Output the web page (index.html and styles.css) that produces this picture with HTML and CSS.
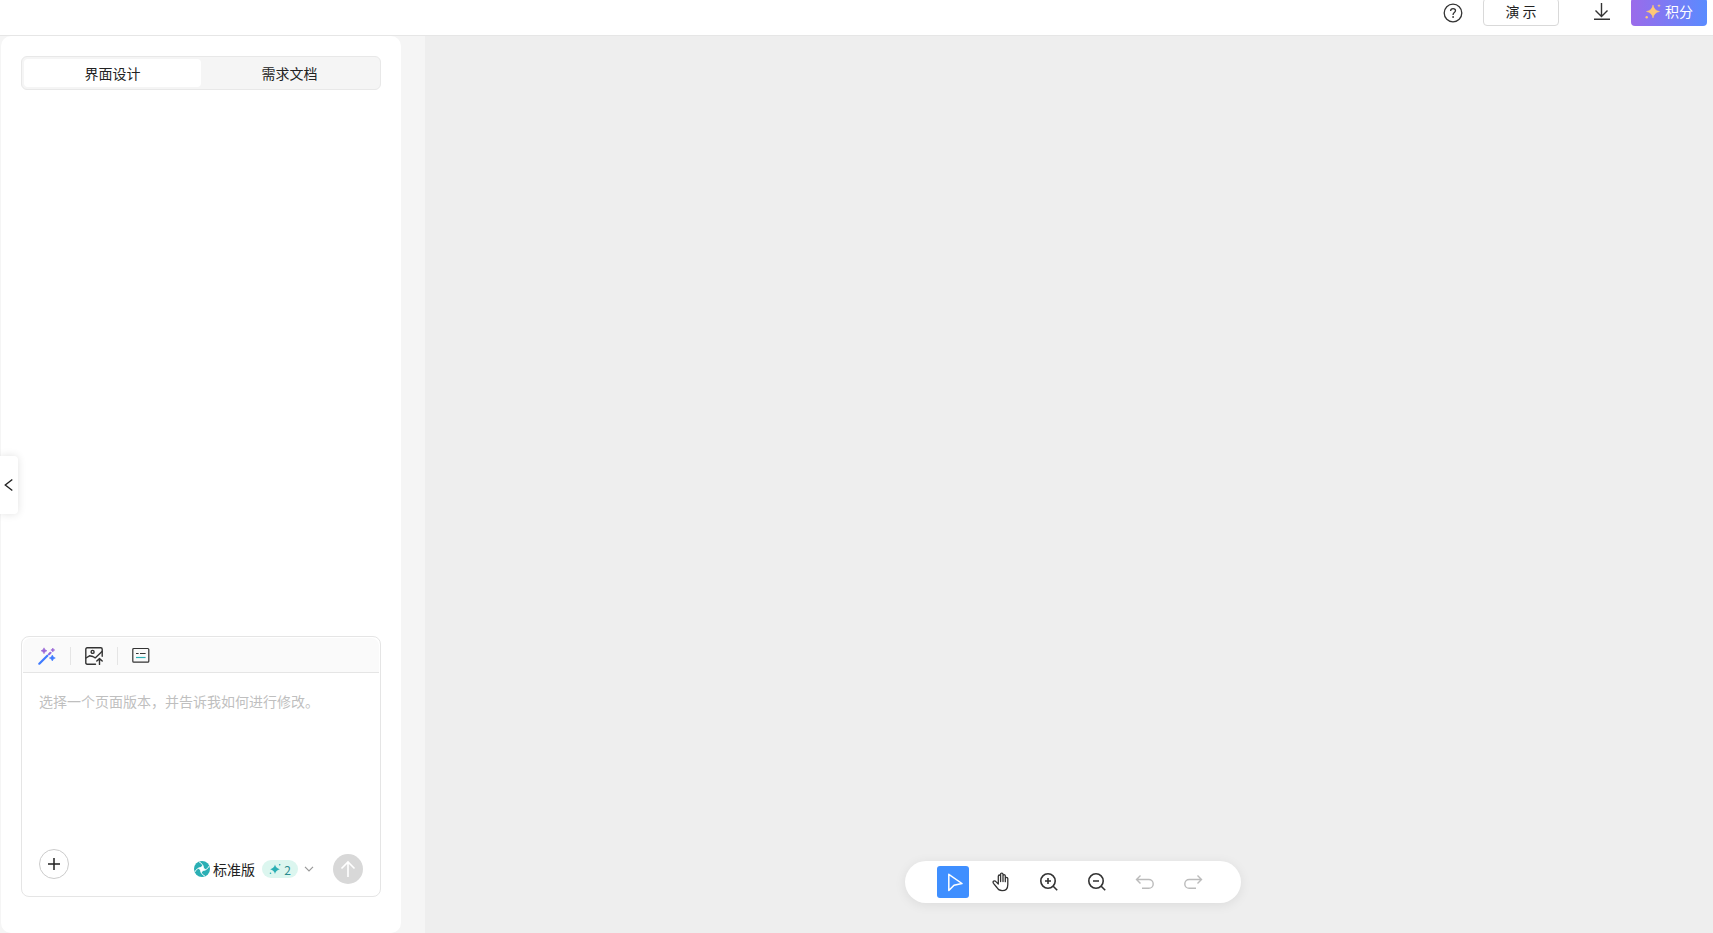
FILE: index.html
```html
<!DOCTYPE html>
<html lang="zh-CN">
<head>
    <meta charset="UTF-8">
    <title>界面设计</title>
    <link rel="stylesheet" href="styles.css">
</head>

<body>

<!-- Top bar -->
<header class="topbar">
    <button type="button" class="icon-btn help-btn" aria-label="帮助">
        <svg width="20" height="20" viewBox="0 0 20 20" fill="none" stroke="#333" stroke-width="1.3">
            <circle cx="10" cy="10" r="8.8"/>
            <path d="M7.6 8.1c0-1.5 1-2.5 2.5-2.5s2.4 1 2.4 2.2c0 1.6-2.4 1.9-2.4 3.7v.4"/>
            <circle cx="10.1" cy="14" r=".9" fill="#333" stroke="none"/>
        </svg>
    </button>
    <button type="button" class="demo-btn">演 示</button>
    <button type="button" class="icon-btn download-btn" aria-label="下载">
        <svg width="18" height="20" viewBox="0 0 18 20" fill="none" stroke="#333" stroke-width="1.4">
            <path d="M8.5 1v13M2.5 8.5l6 6 6-6M1 17.3h16"/>
        </svg>
    </button>
    <button type="button" class="points-btn">
        <svg width="16" height="16" viewBox="0 0 16 16" fill="#ffc876">
            <path d="M8 2Q9 7.500 14.500 8.500 9 9.500 8 15 7 9.500 1.500 8.500 7 7.500 8 2z" stroke="#ffc876" stroke-width=".5"/>
            <path d="M14 1l.5 1.300 1.300.5-1.300.5-.5 1.300-.5-1.300-1.300-.5 1.300-.5z"/>
            <circle cx="1.700" cy="14.300" r="1.200"/>
        </svg>
        <span>积分</span>
    </button>
</header>

<main class="workspace">

    <!-- Left panel -->
    <section class="sidebar">
        <div class="panel">
            <div class="tabs">
                <button type="button" class="tab active">界面设计</button>
                <button type="button" class="tab">需求文档</button>
            </div>

            <form class="composer">
                <div class="composer-tools">
                    <button type="button" class="icon-btn" aria-label="魔法优化">
                        <svg width="18" height="18" viewBox="0 0 18 18">
                            <path d="M1.300 16.700L9.300 8.700" stroke="#3f7bff" stroke-width="2.200" stroke-linecap="round"/>
                            <path d="M11 7.200l1.500-1.400" stroke="#8f6be0" stroke-width="2.200" stroke-linecap="round"/>
                            <path d="M6 .8q.6 2.400 3 3-2.400.6-3 3-.6-2.400-3-3 2.400-.6 3-3z" fill="#9b68d6" stroke="#9b68d6" stroke-width=".5"/>
                            <path d="M14.800 1q.4 1.600 2 2-1.600.4-2 2-.4-1.600-2-2 1.600-.4 2-2z" fill="#9b68d6" stroke="#9b68d6" stroke-width=".5"/>
                            <path d="M14.300 8q.6 2.400 3 3-2.400.6-3 3-.6-2.400-3-3 2.400-.6 3-3z" fill="#3f7bff" stroke="#3f7bff" stroke-width=".5"/>
                        </svg>
                    </button>
                    <span class="divider"></span>
                    <button type="button" class="icon-btn" aria-label="上传图片">
                        <svg width="18" height="18" viewBox="0 0 18 18" fill="none" stroke="#333" stroke-width="1.400" stroke-linecap="round" stroke-linejoin="round">
                            <path d="M10.500 17.200H2.200Q.8 17.200.8 15.800V2.200Q.8.8 2.200.8h13.600q1.400 0 1.400 1.400v7"/>
                            <circle cx="7.600" cy="4.900" r="1.500"/>
                            <path d="M1 11l3.500-2.200 3.300.7 2.400 1.400 6.800-6.400"/>
                            <path d="M14.500 17.500v-6M11.800 14l2.700-2.600 2.700 2.600"/>
                        </svg>
                    </button>
                    <span class="divider"></span>
                    <button type="button" class="icon-btn" aria-label="需求列表">
                        <svg width="18" height="18" viewBox="0 0 18 18" fill="none" stroke="#333" stroke-width="1.200">
                            <rect x=".8" y="1.500" width="16" height="13.700" rx="1"/>
                            <path d="M4 6.500h2.600M8 6.500h5.600"/>
                            <path d="M4 10.500h9.600" stroke="#2aafb4"/>
                        </svg>
                    </button>
                </div>

                <textarea class="prompt" aria-label="修改说明" placeholder="选择一个页面版本，并告诉我如何进行修改。"></textarea>

                <div class="composer-footer">
                    <button type="button" class="add-btn" aria-label="添加">
                        <svg width="14" height="14" viewBox="0 0 14 14" stroke="#222" stroke-width="1.500">
                            <path d="M7 1v12M1 7h12"/>
                        </svg>
                    </button>
                    <button type="button" class="model-btn">
                        <svg width="16" height="16" viewBox="0 0 16 16">
                            <circle cx="8" cy="8" r="8" fill="#2aafb4"/>
                            <path d="M9 4.600Q9 7 11.400 9 9 9 7 11.400 7 9 4.600 7 7 7 9 4.600z" fill="#fff" stroke="#fff" stroke-width=".8"/>
                            <g fill="none" stroke="#fff" stroke-width=".9">
                                <path d="M9 5Q8.200 2.200 5 .8"/>
                                <path d="M11 9Q13.800 8.200 15.200 5"/>
                                <path d="M7 11Q7.800 13.800 11 15.200"/>
                                <path d="M5 7Q2.200 7.800.8 11"/>
                            </g>
                        </svg>
                        <span class="model-name">标准版</span>
                        <span class="cost">
                            <svg width="12" height="12" viewBox="0 0 12 12" fill="#2aafb4">
                                <path d="M6 1.500q.8 3.800 4.800 4.700Q6.800 7.100 6 11 5.200 7.100 1.200 6.200 5.200 5.300 6 1.500z"/>
                                <circle cx="10.700" cy="1.800" r=".8"/>
                                <circle cx="1.500" cy="10.200" r=".8"/>
                            </svg>
                            2
                        </span>
                        <svg width="10" height="10" viewBox="0 0 10 10" fill="none" stroke="#999" stroke-width="1.200">
                            <path d="M1 2.800l4 4 4-4"/>
                        </svg>
                    </button>
                    <button type="submit" class="send-btn" aria-label="发送">
                        <svg width="18" height="18" viewBox="0 0 18 18" fill="none" stroke="#fff" stroke-width="1.600">
                            <path d="M9 17V2M2.500 8.500L9 2l6.500 6.500"/>
                        </svg>
                    </button>
                </div>
            </form>
        </div>

        <button type="button" class="collapse-btn" aria-label="收起">
            <svg width="10" height="14" viewBox="0 0 10 14" fill="none" stroke="#222" stroke-width="1.400">
                <path d="M8.300 1.500L1.300 7l7 5.500"/>
            </svg>
        </button>
    </section>

    <!-- Canvas with its tools -->
    <section class="canvas">
        <div class="toolbar">
            <button type="button" class="tool selected" aria-label="选择">
                <svg width="20" height="20" viewBox="0 0 20 20" fill="none" stroke="#fff" stroke-width="1.500" stroke-linejoin="round">
                    <path d="M5.800 2.300L19 11.500l-8 1.700L5.800 18.500z"/>
                </svg>
            </button>
            <button type="button" class="tool" aria-label="移动">
                <svg width="20" height="20" viewBox="0 0 20 20" fill="none" stroke="#333" stroke-width="1.300" stroke-linecap="round" stroke-linejoin="round">
                    <path d="M7.300 12V4.200q0-1.200 1.100-1.200t1.200 1.200V2.300q0-1.200 1.200-1.200T12 2.300v1.500q0-1.100 1.100-1.100t1.200 1.200v2.600q0-1.100 1.200-1.100t1.300 1.200v5.800q0 6.300-5.700 6.300-3.500 0-5.200-3.200L2.500 11.300q-1-1.600.2-2.200t2.500.8L7.300 12M9.600 4.200V9.500M12 3.800v5.700M14.300 6.500v3.200"/>
                </svg>
            </button>
            <button type="button" class="tool" aria-label="放大">
                <svg width="20" height="20" viewBox="0 0 20 20" fill="none" stroke="#333" stroke-width="1.600">
                    <circle cx="9" cy="9" r="7.200"/>
                    <path d="M14.200 14.200l4 4M9 6v6M6 9h6"/>
                </svg>
            </button>
            <button type="button" class="tool" aria-label="缩小">
                <svg width="20" height="20" viewBox="0 0 20 20" fill="none" stroke="#333" stroke-width="1.600">
                    <circle cx="9" cy="9" r="7.200"/>
                    <path d="M14.200 14.200l4 4M6 9h6"/>
                </svg>
            </button>
            <button type="button" class="tool" aria-label="撤销">
                <svg width="20" height="20" viewBox="0 0 20 20" fill="none" stroke="#bbb" stroke-width="1.400">
                    <path d="M5.500 3.500l-4 4 4 4M1.500 7.500h12.300a4.400 4.400 0 0 1 0 8.800H7"/>
                </svg>
            </button>
            <button type="button" class="tool" aria-label="重做">
                <svg width="20" height="20" viewBox="0 0 20 20" fill="none" stroke="#bbb" stroke-width="1.400">
                    <path d="M14.500 3.500l4 4-4 4M18.500 7.500H6.200a4.400 4.400 0 0 0 0 8.800H13"/>
                </svg>
            </button>
        </div>
    </section>

</main>

</body>
</html>
```
FILE: styles.css
```css
* {
    box-sizing: border-box;
}

body {
    display: flex;
    flex-direction: column;
    height: 100vh;
    margin: 0;
    overflow: hidden;
    font-family: "Noto Sans CJK SC", sans-serif;
    font-size: 14px;
    color: #222;
    background-color: #eee;
}

button {
    display: flex;
    align-items: center;
    justify-content: center;
    padding: 0;
    border: none;
    background: none;
    font: inherit;
    color: inherit;
    cursor: pointer;
}

svg {
    display: block;
    flex: none;
}

/* Top bar */
.topbar {
    display: flex;
    flex: none;
    align-items: flex-end;
    justify-content: flex-end;
    height: 36px;
    padding: 0 6px 9px;
    border-bottom: 1px solid #e6e6e6;
    background-color: #fff;
}

.topbar button {
    height: 28px;
}

.help-btn {
    margin-right: 20px;
    padding-top: 2px;
}

.demo-btn {
    width: 76px;
    padding-bottom: 2px;
    border: 1px solid #d9d9d9;
    border-radius: 4px;
}

.download-btn {
    margin: 0 20px 0 34px;
}

.points-btn {
    gap: 4px;
    width: 76px;
    padding-bottom: 2px;
    border-radius: 4px;
    background: linear-gradient(90deg, #9b6bea, #5a8bff);
    color: #fff;
}

/* Main area */
.workspace {
    display: flex;
    flex: 1;
    min-height: 0;
}

.sidebar {
    position: relative;
    display: flex;
    flex: none;
    width: 425px;
    padding: 0 24px 0 1px;
    background-color: #f5f5f5;
}

.panel {
    display: flex;
    flex: 1;
    flex-direction: column;
    justify-content: space-between;
    padding: 20px 20px 36px;
    border-radius: 10px;
    background-color: #fff;
}

/* Tabs */
.tabs {
    display: flex;
    padding: 2px;
    border: 1px solid #e8e8e8;
    border-radius: 6px;
    background-color: #f5f5f5;
}

.tab {
    flex: 1;
    height: 28px;
    border-radius: 4px;
}

.tab.active {
    background-color: #fff;
}

/* Prompt box */
.composer {
    display: flex;
    flex-direction: column;
    height: 261px;
    padding: 1px;
    border: 1px solid #e5e5e5;
    border-radius: 8px;
}

.composer-tools {
    display: flex;
    flex: none;
    align-items: center;
    gap: 14px;
    height: 35px;
    padding: 2px 15px 0;
    border-bottom: 1px solid #e5e5e5;
    border-radius: 8px 8px 0 0;
    background-color: #fafafa;
}

.divider {
    width: 1px;
    height: 18px;
    background-color: #e5e5e5;
}

.prompt {
    flex: 1;
    padding: 17px 16px;
    border: none;
    outline: none;
    resize: none;
    background: none;
    font: inherit;
    line-height: 22px;
}

.prompt::placeholder {
    color: #bfbfbf;
}

.composer-footer {
    display: flex;
    align-items: flex-start;
    padding: 0 16px 11px;
}

.add-btn {
    width: 30px;
    height: 30px;
    border: 1px solid #ccc;
    border-radius: 50%;
}

.model-btn {
    gap: 3px;
    height: 30px;
    margin: 5px 19px 0 auto;
}

.cost {
    display: flex;
    align-items: center;
    justify-content: center;
    gap: 3px;
    width: 36px;
    height: 18px;
    margin: 0 3px 0 4px;
    border-radius: 9px;
    background-color: #dcf6ef;
    color: #2b8c90;
    font-size: 12px;
}

.send-btn {
    width: 30px;
    height: 30px;
    margin-top: 5px;
    border-radius: 50%;
    background-color: #d8d8d8;
}

/* Handle lying over the panel's left edge */
.collapse-btn {
    position: absolute;
    top: 50%;
    left: 0;
    width: 18px;
    height: 58px;
    transform: translateY(-50%);
    border-radius: 0 4px 4px 0;
    background-color: #fff;
    box-shadow: 0 0 8px rgba(0, 0, 0, 0.12);
}

/* Canvas */
.canvas {
    display: flex;
    flex: 1;
    align-items: flex-end;
    justify-content: center;
    padding: 0 0 30px 8px;
}

.toolbar {
    display: flex;
    gap: 16px;
    padding: 5px 32px;
    border-radius: 21px;
    background-color: #fff;
    box-shadow: 0 2px 12px rgba(0, 0, 0, 0.08);
}

.tool {
    width: 32px;
    height: 32px;
    border-radius: 3px;
}

.tool.selected {
    background-color: #3f8fff;
}
```
